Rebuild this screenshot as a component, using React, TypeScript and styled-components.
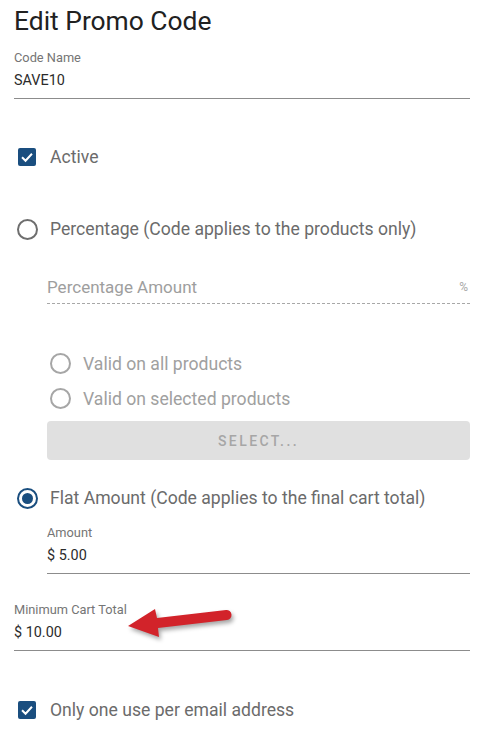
import React from "react";
import styled, { createGlobalStyle } from "styled-components";

const Global = createGlobalStyle`
  html, body { margin: 0; padding: 0; background: #fff; }
  body { font-family: Roboto, "Liberation Sans", Arial, sans-serif; }
`;

const NAVY = "#1a4e7f";

const Page = styled.div`
  display: flex;
  flex-direction: column;
  padding: 0 9px 0 14px;
  width: 479px;
  box-sizing: border-box;
`;

const Title = styled.h1`
  margin: 0;
  font-size: 26.4px;
  font-weight: 400;
  line-height: 42px;
  color: #212121;
`;

const Field = styled.div<{ $mt: number }>`
  position: relative;
  display: flex;
  flex-direction: column;
  margin-top: ${(p) => p.$mt}px;
  padding-bottom: 7px;
  border-bottom: 1px solid #8c8c8c;
`;

const FieldLabel = styled.div`
  font-size: 12.8px;
  line-height: 16px;
  color: #757575;
`;

const FieldValue = styled.div`
  margin-top: 5px;
  font-size: 14.4px;
  line-height: 20px;
  color: #2b2b2b;
`;

const DottedField = styled.div<{ $mt: number }>`
  display: flex;
  align-items: center;
  justify-content: space-between;
  margin-top: ${(p) => p.$mt}px;
  height: 24px;
  padding-bottom: 4px;
  border-bottom: 1px dashed #a8a8a8;
`;

const Placeholder = styled.span`
  font-size: 17px;
  color: #9e9e9e;
`;

const Suffix = styled.span`
  font-size: 12px;
  color: #a8a8a8;
  padding-right: 2px;
`;

const Row = styled.div<{ $mt: number; $h: number }>`
  display: flex;
  align-items: center;
  margin-top: ${(p) => p.$mt}px;
  height: ${(p) => p.$h}px;
`;

const ControlSlot = styled.span`
  display: flex;
  align-items: center;
  justify-content: center;
  width: 26px;
  margin-right: 10px;
  flex: none;
`;

const CheckBox = styled.span`
  display: flex;
  align-items: center;
  justify-content: center;
  width: 18px;
  height: 18px;
  border-radius: 2px;
  background: ${NAVY};
`;

const Radio = styled.span<{ $checked?: boolean; $disabled?: boolean }>`
  display: flex;
  align-items: center;
  justify-content: center;
  box-sizing: border-box;
  width: 21px;
  height: 21px;
  border-radius: 50%;
  border: 2px solid
    ${(p) => (p.$checked ? NAVY : p.$disabled ? "#a6a6a6" : "#6e6e6e")};
  &::after {
    content: "";
    display: ${(p) => (p.$checked ? "block" : "none")};
    width: 11px;
    height: 11px;
    border-radius: 50%;
    background: ${NAVY};
  }
`;

const RowLabel = styled.span<{ $disabled?: boolean }>`
  font-size: 17.6px;
  color: ${(p) => (p.$disabled ? "#a0a0a0" : "#6b6b6b")};
`;

const Indent = styled.div`
  display: flex;
  flex-direction: column;
  padding-left: 33px;
`;

const SelectButton = styled.div`
  display: flex;
  align-items: center;
  justify-content: center;
  margin-top: 5px;
  height: 39px;
  border-radius: 4px;
  background: #e0e0e0;
  color: #a6a6a6;
  font-size: 14px;
  font-weight: 500;
  letter-spacing: 2.4px;
`;

const ArrowSvg = styled.svg`
  position: absolute;
  left: 110px;
  top: 0;
  overflow: visible;
  filter: drop-shadow(2px 3px 2px rgba(0, 0, 0, 0.35));
`;

const Check = () => (
  <CheckBox>
    <svg width="14" height="14" viewBox="0 0 24 24">
      <path
        d="M3.5 12.5 L9.5 18.5 L20.5 6.5"
        fill="none"
        stroke="#fff"
        strokeWidth="3.4"
      />
    </svg>
  </CheckBox>
);

export default function App() {
  return (
    <>
      <Global />
      <Page>
        <Title>Edit Promo Code</Title>
        <Field $mt={8}>
          <FieldLabel>Code Name</FieldLabel>
          <FieldValue>SAVE10</FieldValue>
        </Field>

        <Row $mt={38} $h={40}>
          <ControlSlot>
            <Check />
          </ControlSlot>
          <RowLabel>Active</RowLabel>
        </Row>

        <Row $mt={32} $h={40}>
          <ControlSlot>
            <Radio />
          </ControlSlot>
          <RowLabel>Percentage (Code applies to the products only)</RowLabel>
        </Row>

        <Indent>
          <DottedField $mt={26}>
            <Placeholder>Percentage Amount</Placeholder>
            <Suffix>%</Suffix>
          </DottedField>
          <Row $mt={42} $h={35}>
            <ControlSlot>
              <Radio $disabled />
            </ControlSlot>
            <RowLabel $disabled>Valid on all products</RowLabel>
          </Row>
          <Row $mt={0} $h={35}>
            <ControlSlot>
              <Radio $disabled />
            </ControlSlot>
            <RowLabel $disabled>Valid on selected products</RowLabel>
          </Row>
          <SelectButton>SELECT...</SelectButton>
        </Indent>

        <Row $mt={18} $h={40}>
          <ControlSlot>
            <Radio $checked />
          </ControlSlot>
          <RowLabel>Flat Amount (Code applies to the final cart total)</RowLabel>
        </Row>

        <Indent>
          <Field $mt={7}>
            <FieldLabel>Amount</FieldLabel>
            <FieldValue>$ 5.00</FieldValue>
          </Field>
        </Indent>

        <Field $mt={28}>
          <FieldLabel>Minimum Cart Total</FieldLabel>
          <FieldValue>$ 10.00</FieldValue>
          <ArrowSvg width="110" height="45" viewBox="0 0 110 45">
            <path
              d="M4 24 L31 7 L33 16 L102 8 A5 5 0 0 1 103 18 L34 26 L35 35 Z"
              fill="#d2232a"
            />
          </ArrowSvg>
        </Field>

        <Row $mt={39} $h={40}>
          <ControlSlot>
            <Check />
          </ControlSlot>
          <RowLabel>Only one use per email address</RowLabel>
        </Row>
      </Page>
    </>
  );
}
